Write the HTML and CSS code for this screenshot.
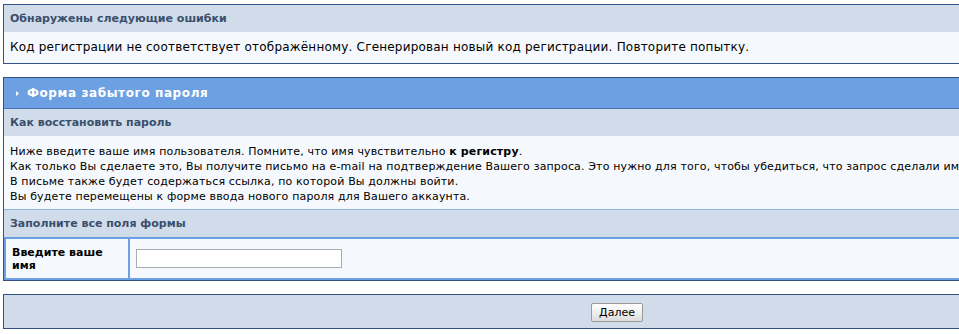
FILE: index.html
```
<!DOCTYPE html>
<html lang="ru">
<head>
    <meta charset="UTF-8">
    <title>Форма забытого пароля</title>
    <link rel="stylesheet" href="styles.css">
</head>
<body>
    <div class="wrapper">
        <div class="tableborder">
            <div class="pformstrip">Обнаружены следующие ошибки</div>
            <div class="tablepad error-text">Код регистрации не соответствует отображённому. Сгенерирован новый код регистрации. Повторите попытку.</div>
        </div>

        <div class="tableborder box-gap">
            <div class="maintitle">
                <svg class="arrow" width="3" height="5" viewBox="0 0 3 5"><path d="M0 0 L3 2.5 L0 5 Z" fill="#ffffff"/></svg>
                Форма забытого пароля
            </div>
            <div class="pformstrip">Как восстановить пароль</div>
            <div class="tablepad info-text">
                Ниже введите ваше имя пользователя. Помните, что имя чувствительно <b>к регистру</b>.<br>
                Как только Вы сделаете это, Вы получите письмо на e-mail на подтверждение Вашего запроса. Это нужно для того, чтобы убедиться, что запрос сделали именно Вы.<br>
                В письме также будет содержаться ссылка, по которой Вы должны войти.<br>
                Вы будете перемещены к форме ввода нового пароля для Вашего аккаунта.
            </div>
            <div class="pformstrip strip-lined">Заполните все поля формы</div>
            <div class="formrow">
                <div class="pformleft">Введите ваше имя</div>
                <div class="pformright">
                    <input type="text" class="forminput" name="member_name">
                </div>
            </div>
        </div>

        <div class="tableborder box-gap">
            <div class="pformstrip buttons">
                <button class="button">Далее</button>
            </div>
        </div>
    </div>
</body>
</html>
```

FILE: styles.css
```
*{
    margin: 0;
    padding: 0;
    box-sizing: border-box;
}
html,body{
    overflow: hidden;
}
body{
    font-family: "DejaVu Sans", Verdana, sans-serif;
    font-size: 11px;
    color: #000000;
    background-color: #ffffff;
}
.wrapper{
    width: 1231px;
    padding: 4px 0 0 3px;
}
.tableborder{
    border: 1px solid #345487;
    background-color: #ffffff;
}
.box-gap{
    margin-top: 13px;
}
.maintitle{
    height: 31px;
    padding: 0 0 0 12px;
    display: flex;
    align-items: center;
    gap: 8px;
    background-color: #6ca0e2;
    border-bottom: 1px solid #4a76b5;
    color: #ffffff;
    font-weight: bold;
    font-size: 12px;
    letter-spacing: 0.6px;
}
.pformstrip{
    background-color: #d1dceb;
    color: #3a4f6c;
    font-weight: bold;
    line-height: 14px;
    padding: 7px 6px 6px;
}
.strip-lined{
    border-top: 1px solid #8db2e6;
}
.tablepad{
    background-color: #f5f9fd;
    padding: 8px 6px;
    line-height: 15px;
}
.error-text{
    font-size: 12px;
    letter-spacing: 0.2px;
}
.info-text{
    padding: 8px 6px 5px;
    letter-spacing: 0.15px;
    white-space: nowrap;
}
.formrow{
    display: flex;
    gap: 2px;
    padding: 2px 0 2px 2px;
    background-color: #6ca0e2;
}
.pformleft{
    width: 122px;
    padding: 7px 6px 6px;
    background-color: #f5f9fd;
    font-weight: bold;
    line-height: 13px;
}
.pformright{
    flex: 1;
    padding: 0 6px;
    display: flex;
    align-items: center;
    background-color: #f5f9fd;
}
.forminput{
    width: 206px;
    height: 19px;
    border: 1px solid #a5acb2;
    background-color: #ffffff;
    font-family: "DejaVu Sans", Verdana, sans-serif;
    font-size: 11px;
}
.buttons{
    text-align: center;
    padding: 8px 0 6px;
    line-height: 19px;
}
.button{
    width: 52px;
    height: 19px;
    font-family: "DejaVu Sans", Verdana, sans-serif;
    font-size: 11px;
    font-weight: normal;
    color: #000000;
    border: 1px solid #9a9a9a;
    border-radius: 2px;
    background: linear-gradient(#ffffff, #ececec 60%, #dcdcdc);
    vertical-align: top;
}
```
